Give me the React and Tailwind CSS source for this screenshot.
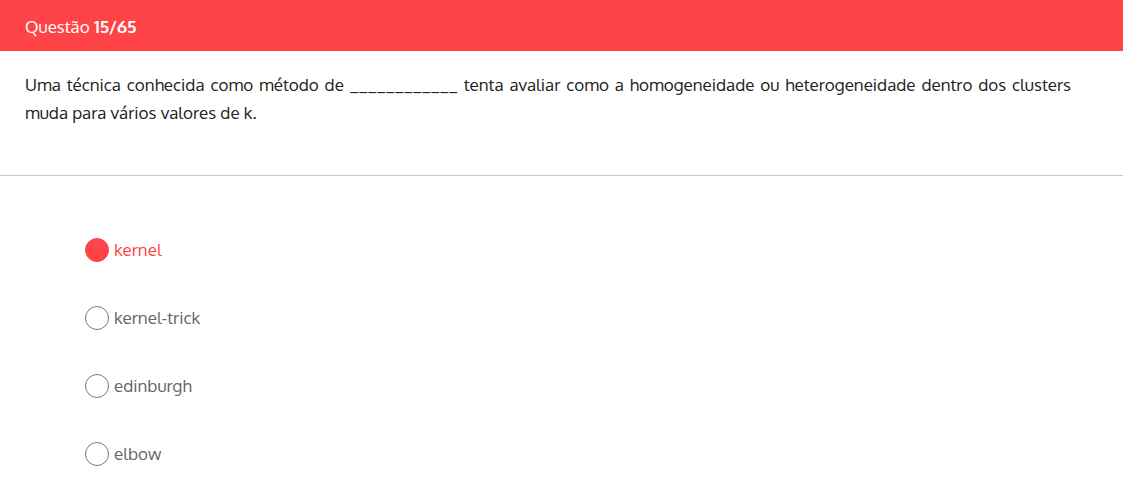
import React, { useState } from "react";

const options = ["kernel", "kernel-trick", "edinburgh", "elbow"];

export default function App() {
  const [selected, setSelected] = useState("kernel");
  return (
    <main className="min-h-screen bg-white font-['Oxygen','Noto_Sans',sans-serif] text-[17px]">
      <header className="bg-[#ff4447] px-[25px] pt-[15px] pb-3 text-white">
        <h1 className="leading-6">
          Questão <strong className="font-bold">15/65</strong>
        </h1>
      </header>
      <section className="border-b border-[#c8c8c8] pt-5 pr-[52px] pb-12 pl-[25px]">
        <p className="text-justify leading-7 text-[#222]">
          Uma técnica conhecida como método de ____________ tenta avaliar como a homogeneidade ou
          heterogeneidade dentro dos clusters muda para vários valores de k.
        </p>
      </section>
      <fieldset className="flex flex-col gap-11 px-[85px] pt-[62px]">
        {options.map((option) => (
          <label
            key={option}
            className="flex w-fit cursor-pointer items-center gap-[5px] leading-6 text-[#666] has-checked:text-[#ff4447]"
          >
            <input
              type="radio"
              name="answer"
              value={option}
              checked={selected === option}
              onChange={() => setSelected(option)}
              className="size-6 appearance-none rounded-full border border-[#777] bg-white checked:border-[#ff4447] checked:bg-[#ff4447]"
            />
            {option}
          </label>
        ))}
      </fieldset>
    </main>
  );
}
